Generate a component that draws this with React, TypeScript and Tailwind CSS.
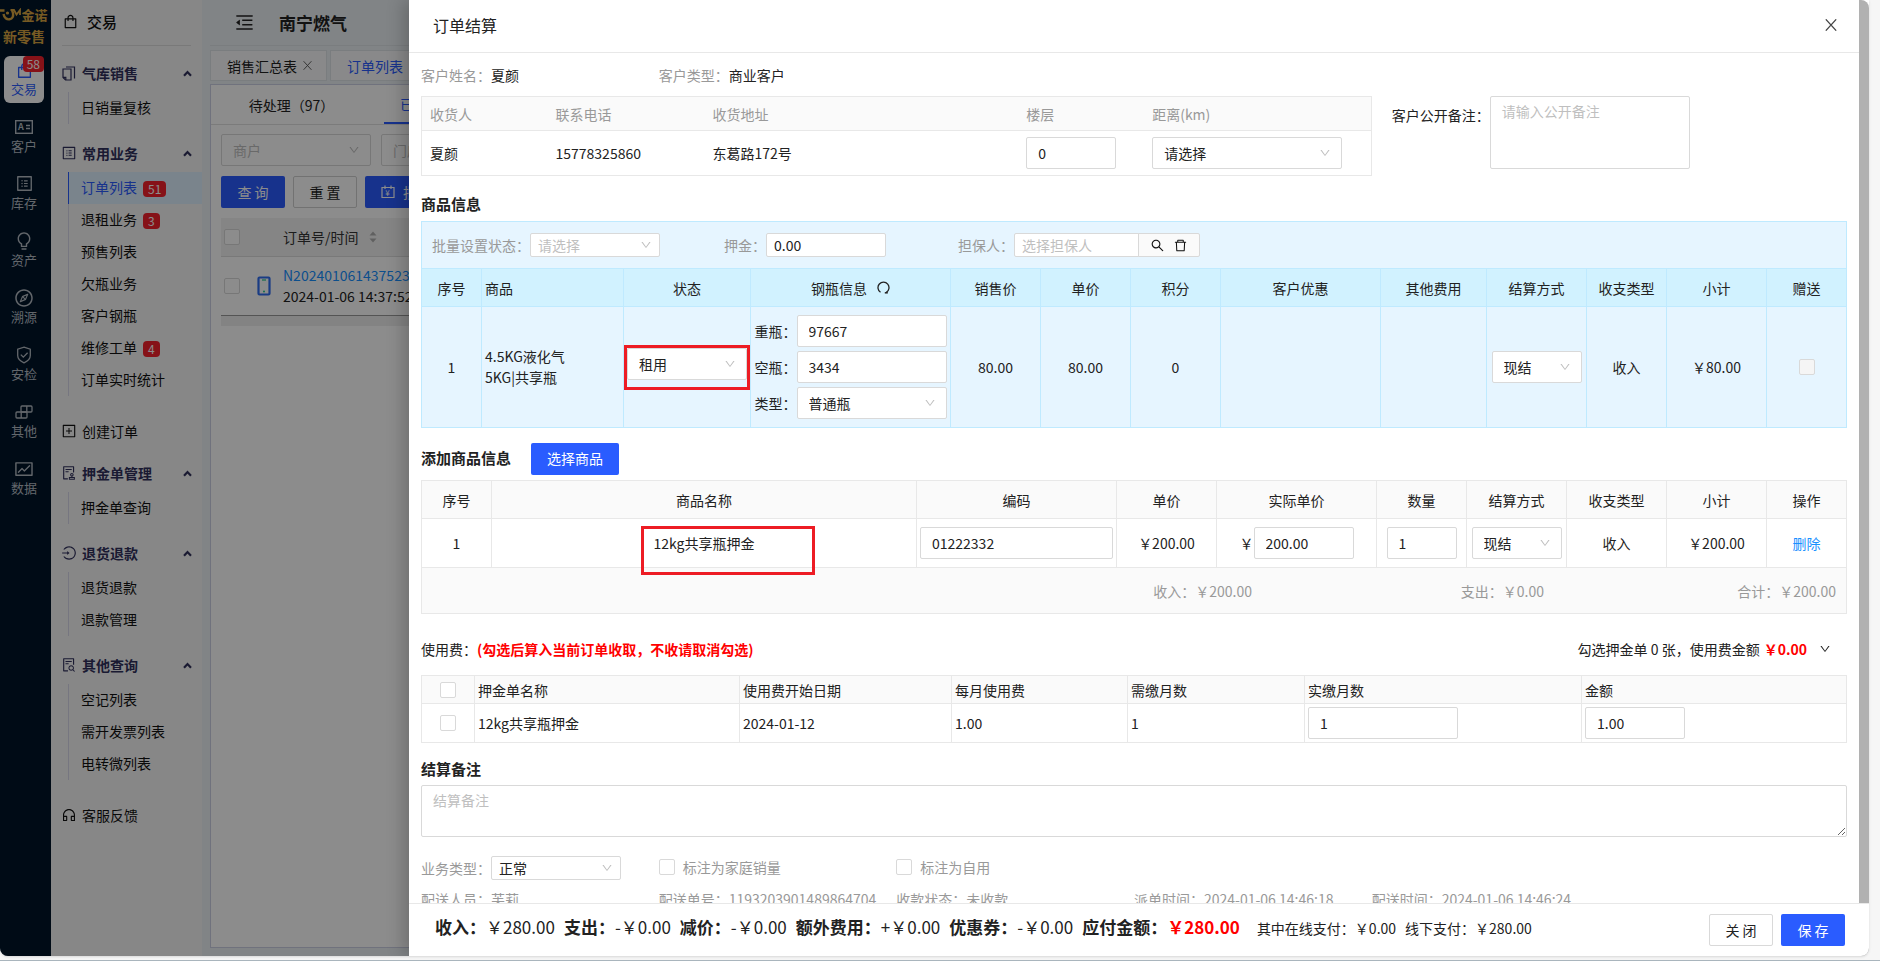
import { useState } from "react";
import type { ReactNode } from "react";
import clsx from "clsx";
import {
  AiOutlineAudit,
  AiOutlineBulb,
  AiOutlineCompass,
  AiOutlineCustomerService,
  AiOutlineDelete,
  AiOutlineDown,
  AiOutlineFileSearch,
  AiOutlineFund,
  AiOutlineLogin,
  AiOutlineMenuFold,
  AiOutlinePlusSquare,
  AiOutlineProfile,
  AiOutlineSearch,
  AiOutlineShopping,
} from "react-icons/ai";

/* ---------- icons ---------- */

function LogoMark() {
  return (
    <svg width="21" height="14" viewBox="0 0 21 14" fill="none" stroke="currentColor">
      <path d="M0 2.5h4.500M3.500 6C4.200 9.800 6.800 11.800 9.500 11.300 12.500 10.800 13.600 8.500 13 5L12 2" strokeWidth="2.400" />
      <path d="M10.500 2h3.500l2.500 4.500L20 2v5" strokeWidth="1.800" />
      <circle cx="7.500" cy="5" r="1.600" fill="currentColor" stroke="none" />
    </svg>
  );
}

function CloseIcon({ size }: { size: number }) {
  return (
    <svg width={size} height={size} viewBox="0 0 12 12" fill="none" stroke="currentColor" strokeWidth="1.200">
      <path d="M0.800 0.300l10.400 11.400M11.200 0.300L0.800 11.700" />
    </svg>
  );
}

function CardIcon() {
  return (
    <svg width="18" height="14" viewBox="0 0 18 14" fill="none" stroke="currentColor">
      <rect x="0.700" y="0.700" width="16.600" height="12.600" strokeWidth="1.400" />
      <path d="M11 5.500h4M11 8.500h4" strokeWidth="1.300" />
      <text x="3" y="10.300" fontSize="9" fontWeight="700" fill="currentColor" stroke="none">
        A
      </text>
    </svg>
  );
}

function ShieldIcon() {
  return (
    <svg width="18" height="18" viewBox="0 0 18 18" fill="none" stroke="currentColor" strokeWidth="1.300">
      <path d="M9 1.200l6.300 2v6.300c0 3.300-2.800 5.800-6.300 7.300-3.500-1.500-6.300-4-6.300-7.300V3.200z" />
      <path d="M5.800 8.600l2.500 2.500 4.300-4.300" />
    </svg>
  );
}

function BlocksIcon() {
  return (
    <svg width="18" height="14" viewBox="0 0 18 14" fill="none" stroke="currentColor" strokeWidth="1.300">
      <rect x="6" y="1" width="11" height="6" rx="1" />
      <rect x="1" y="7" width="11" height="6" rx="1" />
      <path d="M11.800 1v6M6.200 7v6" />
    </svg>
  );
}

function PagesIcon() {
  return (
    <svg width="14" height="15" viewBox="0 0 14 15" fill="none" stroke="currentColor" strokeWidth="1.200">
      <path d="M1 3h8v11H3.500L1 11.500z" />
      <path d="M3.800 14v-2.700H1M4 1h8.500v11.500" />
    </svg>
  );
}

function RefreshIcon() {
  return (
    <svg width="13" height="13" viewBox="0 0 13 13" fill="none" stroke="currentColor" strokeWidth="1.300">
      <path d="M3.500 11.300A5.500 5.500 0 1 1 9.300 11.400" />
      <path d="M7.800 11.800h3" strokeWidth="1.500" />
    </svg>
  );
}

function PhoneIcon() {
  return (
    <svg width="14" height="20" viewBox="0 0 14 20" fill="none">
      <rect x="1.500" y="1.500" width="11" height="17" rx="1" stroke="#2f6df0" strokeWidth="2.200" />
      <path d="M5 4h4" stroke="#22c58b" strokeWidth="1.200" />
      <circle cx="7" cy="15.500" r="1" fill="#22c58b" />
    </svg>
  );
}

function BillIcon() {
  return (
    <svg width="14" height="14" viewBox="0 0 14 14" fill="none" stroke="currentColor">
      <path d="M1 2.500h12v10H1zM4 0.500v3.500M10 0.500v3.500" strokeWidth="1.200" />
      <text x="4.300" y="11" fontSize="8" fill="currentColor" stroke="none">
        ¥
      </text>
    </svg>
  );
}

function CaretUp() {
  return (
    <svg width="9" height="7" viewBox="0 0 9 7" fill="none" stroke="currentColor" strokeWidth="2.200">
      <path d="M1 5.800l3.500-3.800L8 5.800" />
    </svg>
  );
}

/* ---------- form controls ---------- */

type SelectProps = {
  label: string;
  options: string[];
  className?: string;
  small?: boolean;
  muted?: boolean;
};

function Select({ label, options, className, small, muted }: SelectProps) {
  return (
    <span className={clsx("relative block shrink-0", className)}>
      <select
        aria-label={label}
        className={clsx(
          "block w-full appearance-none rounded-[2px] border border-[#d9d9d9] bg-white leading-[22px] outline-none",
          small ? "h-6 pl-[7px]" : "h-8 pl-[11px]",
          muted && "text-[#bfbfbf]"
        )}
      >
        {options.map((o) => (
          <option key={o}>{o}</option>
        ))}
      </select>
      <span
        className={clsx(
          "pointer-events-none absolute inset-y-0 flex items-center text-xs text-[#bfbfbf]",
          small ? "right-2" : "right-[11px]"
        )}
      >
        <AiOutlineDown />
      </span>
    </span>
  );
}

type InputProps = {
  label: string;
  value?: string;
  placeholder?: string;
  className?: string;
  small?: boolean;
};

function TextInput({ label, value, placeholder, className, small }: InputProps) {
  return (
    <input
      type="text"
      aria-label={label}
      defaultValue={value}
      placeholder={placeholder}
      className={clsx(
        "block min-w-0 rounded-[2px] border border-[#d9d9d9] bg-white outline-none placeholder:text-[#bfbfbf]",
        small ? "h-6 px-[7px]" : "h-8 px-[11px]",
        className
      )}
    />
  );
}

function Check({ label, disabled }: { label?: string; disabled?: boolean }) {
  return (
    <input
      type="checkbox"
      aria-label={label}
      disabled={disabled}
      className="block size-4 shrink-0 appearance-none rounded-[2px] border border-[#d9d9d9] bg-white checked:bg-[#2a5cff] disabled:bg-[#f5f5f5]"
    />
  );
}

/* ---------- left side ---------- */

const railItems = [
  { label: "客户", icon: <CardIcon /> },
  { label: "库存", icon: <AiOutlineProfile size={19} /> },
  { label: "资产", icon: <AiOutlineBulb size={20} /> },
  { label: "溯源", icon: <AiOutlineCompass size={20} /> },
  { label: "安检", icon: <ShieldIcon /> },
  { label: "其他", icon: <BlocksIcon /> },
  { label: "数据", icon: <AiOutlineFund size={20} /> },
];

function Rail() {
  return (
    <nav className="flex w-[51px] shrink-0 flex-col items-center bg-[#001529] pr-[3px] text-[13px] leading-[18px] text-[#b5bcc4]">
      <div className="flex h-14 flex-col items-center pt-1.5 font-bold text-[#d9a441]">
        <span className="flex items-center">
          <LogoMark />
          金诺
        </span>
        <span className="mt-[3px] text-sm leading-[18px]">新零售</span>
      </div>
      <a
        href="#trade"
        className="relative flex h-[47px] w-10 flex-col items-center justify-end rounded-md bg-white pb-[5px] text-[#2a5cff]"
      >
        <AiOutlineShopping size={19} />
        <span>交易</span>
        <span className="absolute top-0 right-0 rounded-[4px] bg-[#f5222d] px-1 text-xs leading-4 text-white">58</span>
      </a>
      {railItems.map((item) => (
        <a key={item.label} href="#rail" className="mt-2.5 flex h-[47px] w-10 flex-col items-center">
          <span className="flex h-6 items-center pt-[3px]">{item.icon}</span>
          <span>{item.label}</span>
        </a>
      ))}
    </nav>
  );
}

type MenuItem = { label: string; count?: number; active?: boolean };

function MenuIcon({ children }: { children: ReactNode }) {
  return <span className="flex w-3.5 justify-center *:shrink-0">{children}</span>;
}

function MenuGroup({ icon, title, items }: { icon: ReactNode; title: string; items: MenuItem[] }) {
  const [open, setOpen] = useState(true);

  return (
    <section>
      <button
        type="button"
        onClick={() => setOpen(!open)}
        className="flex h-8 w-full items-center gap-1.5 pr-2.5 pb-0.5 pl-[11px] font-bold text-[#31315c]"
      >
        <MenuIcon>{icon}</MenuIcon>
        {title}
        <span className="ml-auto">
          <CaretUp />
        </span>
      </button>
      {open && (
        <ul className="mt-0.5 ml-[17px] border-l border-[#d8d8ea]">
          {items.map((item) => (
            <li key={item.label}>
              <a
                href="#menu"
                className={clsx(
                  "-ml-px flex h-8 items-center gap-1.5 border-l pb-0.5 pl-3",
                  item.active ? "border-[#2a5cff] bg-[#dff0ff] text-[#2a5cff]" : "border-transparent"
                )}
              >
                {item.label}
                {item.count && (
                  <span className="mt-1 rounded-[4px] bg-[#f5222d] px-[5px] text-xs leading-4 text-white">
                    {item.count}
                  </span>
                )}
              </a>
            </li>
          ))}
        </ul>
      )}
    </section>
  );
}

function Sidebar() {
  return (
    <aside className="w-[151px] shrink-0 bg-[#f6f6f6] text-[#111]">
      <div className="mx-[11px] mb-3 flex h-[46px] items-center gap-2 border-b border-[#dcdcdc] pb-0.5 text-[15px] font-medium">
        <AiOutlineShopping size={17} />
        交易
      </div>
      <MenuGroup icon={<PagesIcon />} title="气库销售" items={[{ label: "日销量复核" }]} />
      <div className="mt-3.5">
        <MenuGroup
          icon={<AiOutlineProfile size={16} />}
          title="常用业务"
          items={[
            { label: "订单列表", count: 51, active: true },
            { label: "退租业务", count: 3 },
            { label: "预售列表" },
            { label: "欠瓶业务" },
            { label: "客户钢瓶" },
            { label: "维修工单", count: 4 },
            { label: "订单实时统计" },
          ]}
        />
      </div>
      <a href="#create" className="mt-5 flex h-8 items-center gap-1.5 pb-0.5 pl-[11px]">
        <MenuIcon>
          <AiOutlinePlusSquare size={16} />
        </MenuIcon>
        创建订单
      </a>
      <div className="mt-2.5 flex flex-col gap-3.5">
        <MenuGroup icon={<AiOutlineAudit size={16} />} title="押金单管理" items={[{ label: "押金单查询" }]} />
        <MenuGroup
          icon={<AiOutlineLogin size={16} />}
          title="退货退款"
          items={[{ label: "退货退款" }, { label: "退款管理" }]}
        />
        <MenuGroup
          icon={<AiOutlineFileSearch size={16} />}
          title="其他查询"
          items={[{ label: "空记列表" }, { label: "需开发票列表" }, { label: "电转微列表" }]}
        />
      </div>
      <a href="#support" className="mt-5 flex h-8 items-center gap-1.5 pb-0.5 pl-[11px]">
        <MenuIcon>
          <AiOutlineCustomerService size={16} />
        </MenuIcon>
        客服反馈
      </a>
    </aside>
  );
}

function OrderList() {
  return (
    <main className="flex min-w-0 flex-1 flex-col bg-[#ecf0f4] pb-2 pl-2">
      <header className="flex h-[46px] shrink-0 items-center gap-6 border-b border-[#dfe3e8] pl-6 text-[17px] font-bold">
        <AiOutlineMenuFold size={21} />
        南宁燃气
      </header>
      <div className="mt-1 flex h-[31px] shrink-0 gap-[3px]">
        <div className="flex w-[117px] items-center justify-between border border-[#dfe3e8] bg-[#f9fafb] pr-3.5 pl-4">
          销售汇总表
          <button type="button" aria-label="关闭标签" className="text-[#555]">
            <CloseIcon size={9} />
          </button>
        </div>
        <div className="flex flex-1 items-center border border-[#dfe3e8] bg-[#f9fafb] pl-4 text-[#2a5cff]">订单列表</div>
      </div>
      <div className="mt-[3px] flex flex-1 flex-col border border-[#cdd0e4] bg-white">
        <div className="flex h-10 border-b border-[#e0e0e0]">
          <button type="button" className="w-[173px] pr-3 text-center">
            待处理（97）
          </button>
          <button type="button" className="flex-1 border-b-2 border-[#2a5cff] pl-4 text-left text-[#2a5cff]">
            已处理
          </button>
        </div>
        <div className="px-2.5 pt-[9px]">
          <div className="flex gap-2.5">
            <Select label="商户" options={["商户"]} muted className="w-[150px]" />
            <Select label="门店" options={["门店"]} muted className="w-[150px]" />
          </div>
          <div className="mt-2.5 flex gap-2">
            <button type="button" className="h-8 w-16 rounded-[2px] bg-[#2a5cff] text-white">
              查 询
            </button>
            <button type="button" className="h-8 w-16 rounded-[2px] border border-[#d0d0d0] bg-white">
              重 置
            </button>
            <button
              type="button"
              className="flex h-8 w-[120px] items-center gap-2 rounded-[2px] bg-[#2a5cff] pl-4 text-white"
            >
              <BillIcon />
              批量结算
            </button>
          </div>
          <table className="mt-2.5 w-full table-fixed text-left">
            <thead className="bg-[#f3f3f3]">
              <tr className="h-[38px] border-b border-[#ddd]">
                <th className="w-8 pl-[3px]">
                  <Check label="全选订单" />
                </th>
                <th className="w-[30px]" />
                <th className="font-normal">
                  <span className="flex items-center gap-2.5 text-[#333]">
                    订单号/时间
                    <svg width="8" height="12" viewBox="0 0 8 12" fill="#b0b0b0">
                      <path d="M0.500 4.500L4 0.500l3.500 4zM0.500 7.500L4 11.500l3.500-4z" />
                    </svg>
                  </span>
                </th>
              </tr>
            </thead>
            <tbody>
              <tr className="h-[59px] border-b border-[#999]">
                <td className="pl-[3px]">
                  <Check label="选择订单" />
                </td>
                <td className="pl-1">
                  <PhoneIcon />
                </td>
                <td className="leading-[21px] whitespace-nowrap">
                  <a href="#order" className="text-[#1890ff]">
                    N20240106143752358
                  </a>
                  <div>2024-01-06 14:37:52</div>
                </td>
              </tr>
            </tbody>
          </table>
          <div className="h-2.5 bg-[#efefef]" />
        </div>
      </div>
    </main>
  );
}

/* ---------- drawer ---------- */

function Receiver() {
  return (
    <div className="mt-[9px] flex items-start">
      <table className="w-2/3 table-fixed border border-[#e8e8e8] text-left">
        <thead className="bg-[#fafafa] text-[#999]">
          <tr className="h-[34px] border-b border-[#e8e8e8]">
            <th className="w-[126px] px-2 font-normal">收货人</th>
            <th className="w-[157px] px-2 font-normal">联系电话</th>
            <th className="px-2 font-normal">收货地址</th>
            <th className="w-[126px] px-2 font-normal">楼层</th>
            <th className="w-[227px] px-2 font-normal">距离(km)</th>
          </tr>
        </thead>
        <tbody>
          <tr className="h-[45px]">
            <td className="px-2">夏颜</td>
            <td className="px-2">15778325860</td>
            <td className="px-2">东葛路172号</td>
            <td className="px-2">
              <TextInput label="楼层" value="0" className="w-[90px]" />
            </td>
            <td className="px-2">
              <Select label="距离" options={["请选择"]} className="w-[190px]" />
            </td>
          </tr>
        </tbody>
      </table>
      <label htmlFor="public-note" className="mt-2 ml-5">
        客户公开备注：
      </label>
      <textarea
        id="public-note"
        placeholder="请输入公开备注"
        className="h-[73px] w-[200px] resize-none rounded-[2px] border border-[#d9d9d9] px-[11px] py-[3px] leading-[22px] outline-none placeholder:text-[#bfbfbf]"
      />
    </div>
  );
}

const goodsColumns = [
  { title: "销售价", width: "w-[90px]" },
  { title: "单价", width: "w-[90px]" },
  { title: "积分", width: "w-[90px]" },
  { title: "客户优惠", width: "w-[160px]" },
  { title: "其他费用", width: "w-[106px]" },
  { title: "结算方式", width: "w-[100px]" },
  { title: "收支类型", width: "w-[80px]" },
  { title: "小计", width: "w-[100px]" },
  { title: "赠送", width: "w-[80px]" },
];

function Goods() {
  const cell = "border border-[#bfeaff]";

  return (
    <div className="mt-1.5 border-t border-[#bfeaff] bg-[#e6f5ff]">
      <div className="flex h-[46px] items-center border-x border-[#bfeaff] pl-2.5 text-[#999]">
        <div className="flex w-[292px] items-center">
          批量设置状态：
          <Select label="批量设置状态" options={["请选择"]} small muted className="w-[130px]" />
        </div>
        <div className="flex w-[234px] items-center">
          押金：
          <TextInput label="押金" value="0.00" small className="w-[120px] text-[#222]" />
        </div>
        <div className="flex items-center">
          担保人：
          <TextInput label="担保人" placeholder="选择担保人" small className="w-[125px] rounded-r-none" />
          <div className="-ml-px flex h-6 w-[62px] items-center justify-center gap-2 rounded-r-[2px] border border-[#d9d9d9] bg-[#fafafa] text-[#111]">
            <button type="button" aria-label="搜索">
              <AiOutlineSearch size={15} />
            </button>
            <button type="button" aria-label="清除">
              <AiOutlineDelete size={15} />
            </button>
          </div>
        </div>
      </div>
      <table className="w-full table-fixed border-collapse text-center">
        <thead className="bg-[#d1f2ff]">
          <tr className="h-[38px]">
            <th className={clsx(cell, "w-[60px] font-normal")}>序号</th>
            <th className={clsx(cell, "pl-[3px] text-left font-normal")}>商品</th>
            <th className={clsx(cell, "w-[127px] font-normal")}>状态</th>
            <th className={clsx(cell, "w-[200px] font-normal")}>
              <span className="flex items-center justify-center gap-2.5">
                钢瓶信息
                <RefreshIcon />
              </span>
            </th>
            {goodsColumns.map((col) => (
              <th key={col.title} className={clsx(cell, col.width, "font-normal")}>
                {col.title}
              </th>
            ))}
          </tr>
        </thead>
        <tbody>
          <tr className="h-[121px]">
            <td className={cell}>1</td>
            <td className={clsx(cell, "pl-[3px] text-left leading-[21px]")}>
              4.5KG液化气
              <br />
              5KG|共享瓶
            </td>
            <td className={cell}>
              <div className="relative mx-auto mb-1.5 w-[120px]">
                <Select label="状态" options={["租用"]} className="w-[120px]" />
                <div className="pointer-events-none absolute -inset-x-[3px] -top-[3px] h-[45px] border-[3px] border-[#ed1c24]" />
              </div>
            </td>
            <td className={cell}>
              <div className="flex flex-col items-center gap-1">
                <div className="flex items-center">
                  重瓶：
                  <TextInput label="重瓶" value="97667" className="w-[150px]" />
                </div>
                <div className="flex items-center">
                  空瓶：
                  <TextInput label="空瓶" value="3434" className="w-[150px]" />
                </div>
                <div className="flex items-center">
                  类型：
                  <Select label="类型" options={["普通瓶"]} className="w-[150px]" />
                </div>
              </div>
            </td>
            <td className={cell}>80.00</td>
            <td className={cell}>80.00</td>
            <td className={cell}>0</td>
            <td className={cell} />
            <td className={cell} />
            <td className={cell}>
              <Select label="结算方式" options={["现结"]} className="mx-auto w-[90px]" />
            </td>
            <td className={cell}>收入</td>
            <td className={cell}>￥80.00</td>
            <td className={cell}>
              <span className="flex justify-center">
                <Check label="赠送" disabled />
              </span>
            </td>
          </tr>
        </tbody>
      </table>
    </div>
  );
}

const extraColumns = [
  { title: "序号", width: "w-[70px]" },
  { title: "商品名称", width: "" },
  { title: "编码", width: "w-[200px]" },
  { title: "单价", width: "w-[100px]" },
  { title: "实际单价", width: "w-[160px]" },
  { title: "数量", width: "w-[90px]" },
  { title: "结算方式", width: "w-[100px]" },
  { title: "收支类型", width: "w-[100px]" },
  { title: "小计", width: "w-[100px]" },
  { title: "操作", width: "w-[80px]" },
];

function ExtraGoods() {
  const cell = "border border-[#e8e8e8]";

  return (
    <>
      <table className="mt-[5px] w-full table-fixed border-collapse text-center">
        <thead className="bg-[#fafafa]">
          <tr className="h-[38px]">
            {extraColumns.map((col) => (
              <th key={col.title} className={clsx(cell, col.width, "font-normal")}>
                {col.title}
              </th>
            ))}
          </tr>
        </thead>
        <tbody>
          <tr className="h-[49px]">
            <td className={cell}>1</td>
            <td className={cell}>
              <span className="relative inline-block">
                12kg共享瓶押金
                <span className="pointer-events-none absolute -top-1.5 -left-3 h-[49px] w-[174px] border-[3px] border-[#ed1c24]" />
              </span>
            </td>
            <td className={clsx(cell, "px-[3px]")}>
              <TextInput label="编码" value="01222332" className="w-full" />
            </td>
            <td className={cell}>￥200.00</td>
            <td className={cell}>
              <span className="flex items-center justify-center">
                ￥
                <TextInput label="实际单价" value="200.00" className="w-[100px]" />
              </span>
            </td>
            <td className={cell}>
              <TextInput label="数量" value="1" className="mx-auto w-[70px]" />
            </td>
            <td className={cell}>
              <Select label="结算方式" options={["现结"]} className="mx-auto w-[90px]" />
            </td>
            <td className={cell}>收入</td>
            <td className={cell}>￥200.00</td>
            <td className={cell}>
              <a href="#remove" className="text-[#1890ff]">
                删除
              </a>
            </td>
          </tr>
        </tbody>
      </table>
      <div className="flex h-[46px] items-center justify-end border-x border-b border-[#e8e8e8] bg-[#fafafa] pr-2.5 text-right text-[#999]">
        <span className="w-[292px]">收入：￥200.00</span>
        <span className="w-[292px]">支出：￥0.00</span>
        <span className="w-[292px]">合计：￥200.00</span>
      </div>
    </>
  );
}

function UsageFee() {
  const cell = "border border-[#e8e8e8]";

  return (
    <>
      <div className="mt-6 flex items-center">
        使用费：
        <strong className="text-[#f00]">(勾选后算入当前订单收取，不收请取消勾选)</strong>
        <span className="ml-auto">勾选押金单 0 张，使用费金额</span>
        <strong className="ml-1 text-[#f00]">￥0.00</strong>
        <button type="button" aria-label="收起" className="mr-4 ml-3 text-xs">
          <AiOutlineDown />
        </button>
      </div>
      <table className="mt-[15px] w-full table-fixed border-collapse text-left">
        <thead className="bg-[#fafafa]">
          <tr className="h-7">
            <th className={clsx(cell, "w-[53px]")}>
              <span className="flex justify-center">
                <Check label="全选押金单" />
              </span>
            </th>
            <th className={clsx(cell, "w-[265px] px-[3px] font-normal")}>押金单名称</th>
            <th className={clsx(cell, "w-[212px] px-[3px] font-normal")}>使用费开始日期</th>
            <th className={clsx(cell, "w-[176px] px-[3px] font-normal")}>每月使用费</th>
            <th className={clsx(cell, "w-[177px] px-[3px] font-normal")}>需缴月数</th>
            <th className={clsx(cell, "px-[3px] font-normal")}>实缴月数</th>
            <th className={clsx(cell, "w-[265px] px-[3px] font-normal")}>金额</th>
          </tr>
        </thead>
        <tbody>
          <tr className="h-[39px]">
            <td className={cell}>
              <span className="flex justify-center">
                <Check label="选择押金单" />
              </span>
            </td>
            <td className={clsx(cell, "px-[3px]")}>12kg共享瓶押金</td>
            <td className={clsx(cell, "px-[3px]")}>2024-01-12</td>
            <td className={clsx(cell, "px-[3px]")}>1.00</td>
            <td className={clsx(cell, "px-[3px]")}>1</td>
            <td className={clsx(cell, "px-[3px]")}>
              <TextInput label="实缴月数" value="1" className="w-[150px]" />
            </td>
            <td className={clsx(cell, "px-[3px]")}>
              <TextInput label="金额" value="1.00" className="w-[100px]" />
            </td>
          </tr>
        </tbody>
      </table>
    </>
  );
}

function Summary({ title, value }: { title: string; value: string }) {
  return (
    <span>
      <strong>{title}：</strong>
      {value}
    </span>
  );
}

function Drawer() {
  return (
    <div
      role="dialog"
      aria-label="订单结算"
      className="absolute inset-y-0 right-0 left-[409px] flex flex-col bg-white shadow-[-6px_0_16px_rgba(0,0,0,0.2)]"
    >
      <div className="flex min-h-0 flex-1">
        <div className="flex min-w-0 flex-1 flex-col">
          <div className="flex h-[53px] shrink-0 items-center justify-between border-b border-[#e8e8e8] pr-[22px] pb-0.5 pl-6">
            <h2 className="text-base">订单结算</h2>
            <button type="button" aria-label="关闭" className="text-[#444]">
              <CloseIcon size={12} />
            </button>
          </div>
          <div className="min-h-0 flex-1 overflow-hidden px-3 pt-[11px]">
            <div className="mb-2.5 grid grid-cols-6">
              <div>
                <span className="text-[#999]">客户姓名：</span>夏颜
              </div>
              <div>
                <span className="text-[#999]">客户类型：</span>商业客户
              </div>
            </div>
            <Receiver />
            <h3 className="mt-[17px] text-[15px] font-bold">商品信息</h3>
            <Goods />
            <div className="mt-[15px] flex items-center gap-5">
              <h3 className="pb-0.5 text-[15px] font-bold">添加商品信息</h3>
              <button type="button" className="h-8 w-[88px] rounded-[2px] bg-[#2a5cff] pb-0.5 text-white">
                选择商品
              </button>
            </div>
            <ExtraGoods />
            <UsageFee />
            <label htmlFor="settle-note" className="mt-[15px] block text-[15px] font-bold">
              结算备注
            </label>
            <textarea
              id="settle-note"
              placeholder="结算备注"
              className="mt-[5px] block h-[52px] w-full rounded-[2px] border border-[#d9d9d9] px-[11px] py-[3px] leading-[22px] outline-none placeholder:text-[#bfbfbf]"
            />
            <div className="mt-[19px] grid grid-cols-6 text-[#999]">
              <div className="flex items-center">
                业务类型：
                <Select label="业务类型" options={["正常"]} small className="w-[130px] text-[#222]" />
              </div>
              <label className="flex items-center gap-2 pb-0.5">
                <Check />
                标注为家庭销量
              </label>
              <label className="flex items-center gap-2 pb-0.5">
                <Check />
                标注为自用
              </label>
            </div>
            <div className="mt-2 grid grid-cols-6 whitespace-nowrap text-[#999]">
              <div>配送人员：芙莉</div>
              <div>配送单号：1193203901489864704</div>
              <div>收款状态：未收款</div>
              <div>派单时间：2024-01-06 14:46:18</div>
              <div>配送时间：2024-01-06 14:46:24</div>
            </div>
          </div>
        </div>
        <div className="w-2.5 rounded-tr-lg bg-[#b1b1b1]" />
      </div>
      <footer className="flex h-[53px] shrink-0 items-center gap-2 border-t border-[#e8e8e8] pr-6 pl-[26px] text-[17px] whitespace-nowrap">
        <div className="flex items-baseline gap-[9px] pb-1.5">
          <Summary title="收入" value="￥280.00" />
          <Summary title="支出" value="-￥0.00" />
          <Summary title="减价" value="-￥0.00" />
          <Summary title="额外费用" value="+￥0.00" />
          <Summary title="优惠券" value="-￥0.00" />
          <strong>
            应付金额：<span className="text-[#f00]">￥280.00</span>
          </strong>
          <span className="ml-2 text-sm">其中在线支付：￥0.00</span>
          <span className="text-sm">线下支付：￥280.00</span>
        </div>
        <button type="button" className="ml-auto h-8 w-16 rounded-[2px] border border-[#d9d9d9] bg-white text-sm">
          关 闭
        </button>
        <button type="button" className="h-8 w-16 rounded-[2px] bg-[#2a5cff] text-sm text-white">
          保 存
        </button>
      </footer>
    </div>
  );
}

export default function App() {
  return (
    <div className="flex h-screen border-b border-[#a9b5bd] bg-[#f6f6f6] pb-1 font-['Noto_Sans_CJK_SC',sans-serif] text-sm leading-[22px] text-[#222]">
      <div className="relative flex min-w-0 flex-1 overflow-hidden rounded-b-lg shadow">
        <Rail />
        <Sidebar />
        <OrderList />
        <div className="absolute inset-0 bg-black/45" />
        <Drawer />
      </div>
      <div className="w-[11px] shrink-0" />
    </div>
  );
}
